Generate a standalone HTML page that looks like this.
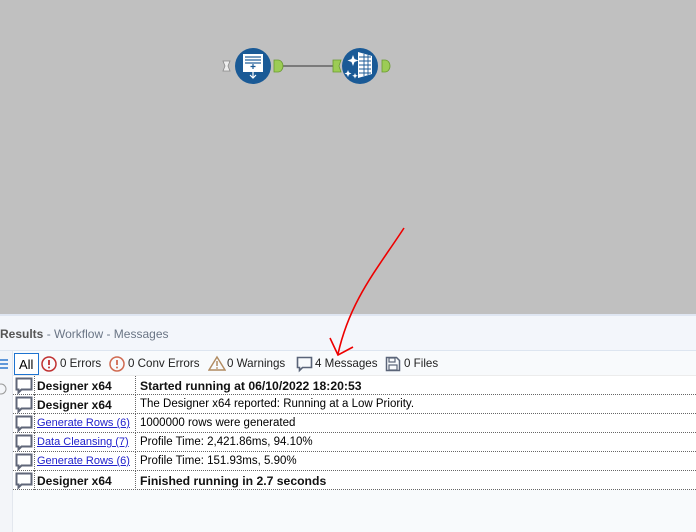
<!DOCTYPE html>
<html><head><meta charset="utf-8"><style>
*{margin:0;padding:0;box-sizing:border-box}
body{width:696px;height:532px;overflow:hidden;position:relative;font-family:"Liberation Sans",Tahoma,sans-serif;font-size:12px;background:#f8fafc}
.canvas{position:absolute;left:0;top:0;width:696px;height:314px;background:#c0c0c0}
.hdr{position:absolute;left:0;top:314px;width:696px;height:37px;background:#f3f6fb;border-top:2px solid #dfe6f2;border-bottom:1px solid #dde5f0}
.hdr span{position:absolute;left:0;top:11px;color:#6a7585;font-size:12px}
.tb{position:absolute;left:0;top:351px;width:696px;height:25px;background:#f8fafc;border-bottom:1px solid #ececec}
.gut{position:absolute;left:0;top:351px;width:13px;height:181px;background:#f3f5f9;border-right:1px solid #e3e7ee}
.ti{position:absolute;top:6px;font-size:11.6px;color:#222;white-space:nowrap}
.rows{position:absolute;left:13px;top:376px;width:683px;background:#fff}
.row{height:19px;border-bottom:1px dotted #666;position:relative;white-space:nowrap}
.row .ic{position:absolute;left:2px;top:1px}
.row .c1{position:absolute;left:24px;top:3px;font-size:11.5px}
.row .c2{position:absolute;left:127px;top:3px;font-size:11.5px}
.row .dv{position:absolute;left:122px;top:0;height:19px;border-left:1px dotted #666}
.row .dv0{position:absolute;left:21px;top:0;height:19px;border-left:1px dotted #666}
b{font-weight:bold;color:#111;font-size:12.2px}
.c1 b{font-size:12px}
a{color:#2222cc;text-decoration:underline;font-size:11px}
</style></head><body>
<div class="canvas">
<svg width="696" height="314" style="position:absolute;left:0;top:0">
<line x1="282" y1="66" x2="334" y2="66" stroke="#7a7a7a" stroke-width="2"/>
<path d="M223 61h7l-2 5 2 5h-7l2-5z" fill="#eee" stroke="#888" stroke-width="0.8"/>
<circle cx="253" cy="66" r="18" fill="#1a5a96"/>
<rect x="243" y="54" width="20" height="18" fill="#fff"/>
<line x1="245" y1="57" x2="261" y2="57" stroke="#1a5a96" stroke-width="1.2"/>
<line x1="245" y1="60" x2="261" y2="60" stroke="#1a5a96" stroke-width="1.2"/>
<line x1="245" y1="63" x2="261" y2="63" stroke="#1a5a96" stroke-width="1.2"/>
<path d="M253 64v5M250.5 66.5h5" stroke="#1a5a96" stroke-width="1.2"/>
<path d="M253 72v6M250 75l3 3 3-3" stroke="#fff" stroke-width="1.2" fill="none"/>
<path d="M274 60h4a5 6 0 0 1 0 12h-4z" fill="#9ccc55" stroke="#6a9a30" stroke-width="0.8"/>
<path d="M333 60h8l-2 6 2 6h-8z" fill="#9ccc55" stroke="#6a9a30" stroke-width="0.8"/>
<circle cx="360" cy="66" r="18" fill="#1a5a96"/>
<path d="M358 52l14 4v18l-14 4z" fill="#fff"/>
<path d="M359 57h12M359 61h12M359 65h12M359 69h12M359 73h12M364 54v22M368 55v20" stroke="#1a5a96" stroke-width="0.9"/>
<path d="M353 55l1.5 4 4 1.5-4 1.5-1.5 4-1.5-4-4-1.5 4-1.5z" fill="#fff"/>
<path d="M348 70l1 2.5 2.5 1-2.5 1-1 2.5-1-2.5-2.5-1 2.5-1z" fill="#fff"/>
<path d="M355 73l.8 2 2 .8-2 .8-.8 2-.8-2-2-.8 2-.8z" fill="#fff"/>
<path d="M382 60h3a5 6 0 0 1 0 12h-3z" fill="#9ccc55" stroke="#6a9a30" stroke-width="0.8"/>
</svg>
</div>
<div class="hdr"><span><b style="color:#555;font-weight:bold;font-size:12px">Results</b> - Workflow - Messages</span></div>
<div class="tb">
<div style="position:absolute;left:14px;top:2px;width:25px;height:22px;border:1px solid #1e73d0;background:#fff;font-size:13px;padding:3px 0 0 4px">All</div>
<svg style="position:absolute;left:41px;top:5px" width="16" height="16"><circle cx="8" cy="8" r="7" fill="none" stroke="#c03030" stroke-width="1.5"/><path d="M8 4v5" stroke="#c03030" stroke-width="1.8"/><circle cx="8" cy="11.5" r="1" fill="#c03030"/></svg>
<span class="ti" style="left:60px">0 Errors</span>
<svg style="position:absolute;left:109px;top:5px" width="16" height="16"><circle cx="8" cy="8" r="7" fill="none" stroke="#d06a50" stroke-width="1.5"/><path d="M8 4v5" stroke="#d06a50" stroke-width="1.8"/><circle cx="8" cy="11.5" r="1" fill="#d06a50"/></svg>
<span class="ti" style="left:128px">0 Conv Errors</span>
<svg style="position:absolute;left:208px;top:4px" width="18" height="17"><path d="M9 2L17 15H1z" fill="none" stroke="#b08a60" stroke-width="1.4"/><path d="M9 6v5" stroke="#b08a60" stroke-width="1.5"/><circle cx="9" cy="13" r=".9" fill="#b08a60"/></svg>
<span class="ti" style="left:227px">0 Warnings</span>
<svg style="position:absolute;left:296px;top:5px" width="17" height="17"><path d="M1.5 1.5h14v10h-9l-3 3v-3h-2z" fill="none" stroke="#5a6478" stroke-width="1.6"/></svg>
<span class="ti" style="left:315px">4 Messages</span>
<svg style="position:absolute;left:385px;top:5px" width="16" height="16"><path d="M1.5 1.5h10l3 3v10h-13z" fill="none" stroke="#5a6478" stroke-width="1.5"/><rect x="4" y="2" width="6" height="4" fill="none" stroke="#5a6478" stroke-width="1.2"/><rect x="4" y="9" width="8" height="5" fill="none" stroke="#5a6478" stroke-width="1.2"/></svg>
<span class="ti" style="left:404px">0 Files</span>
</div>
<div class="gut">
<svg style="position:absolute;left:-2px;top:6px" width="12" height="40"><path d="M2 3h8M2 7h8M2 11h8" stroke="#2f7ad0" stroke-width="1.5"/><circle cx="3" cy="32" r="5" fill="none" stroke="#999"/></svg>
</div>
<div class="rows">
<div class="row"><svg class="ic" width="18" height="18"><path d="M1.5 1.5h15v11h-10l-3 3v-3h-2z" fill="none" stroke="#5f6678" stroke-width="2"/></svg><span class="dv0"></span><span class="c1"><b>Designer x64</b></span><span class="dv"></span><span class="c2"><b>Started running at 06/10/2022 18:20:53</b></span></div>
<div class="row"><svg class="ic" width="18" height="18"><path d="M1.5 1.5h15v11h-10l-3 3v-3h-2z" fill="none" stroke="#5f6678" stroke-width="2"/></svg><span class="dv0"></span><span class="c1"><b>Designer x64</b></span><span class="dv"></span><span class="c2">The Designer x64 reported: Running at a Low Priority.</span></div>
<div class="row"><svg class="ic" width="18" height="18"><path d="M1.5 1.5h15v11h-10l-3 3v-3h-2z" fill="none" stroke="#5f6678" stroke-width="2"/></svg><span class="dv0"></span><span class="c1"><a>Generate Rows (6)</a></span><span class="dv"></span><span class="c2">1000000 rows were generated</span></div>
<div class="row"><svg class="ic" width="18" height="18"><path d="M1.5 1.5h15v11h-10l-3 3v-3h-2z" fill="none" stroke="#5f6678" stroke-width="2"/></svg><span class="dv0"></span><span class="c1"><a>Data Cleansing (7)</a></span><span class="dv"></span><span class="c2">Profile Time: 2,421.86ms, 94.10%</span></div>
<div class="row"><svg class="ic" width="18" height="18"><path d="M1.5 1.5h15v11h-10l-3 3v-3h-2z" fill="none" stroke="#5f6678" stroke-width="2"/></svg><span class="dv0"></span><span class="c1"><a>Generate Rows (6)</a></span><span class="dv"></span><span class="c2">Profile Time: 151.93ms, 5.90%</span></div>
<div class="row"><svg class="ic" width="18" height="18"><path d="M1.5 1.5h15v11h-10l-3 3v-3h-2z" fill="none" stroke="#5f6678" stroke-width="2"/></svg><span class="dv0"></span><span class="c1"><b>Designer x64</b></span><span class="dv"></span><span class="c2"><b>Finished running in 2.7 seconds</b></span></div>
</div>
<svg width="696" height="532" style="position:absolute;left:0;top:0;pointer-events:none">
<path d="M404 228C378 268 350 300 338 354" fill="none" stroke="#ee0000" stroke-width="1.6"/>
<path d="M330 338L338 355L353 347" fill="none" stroke="#ee0000" stroke-width="1.6"/>
</svg>
</body></html>
